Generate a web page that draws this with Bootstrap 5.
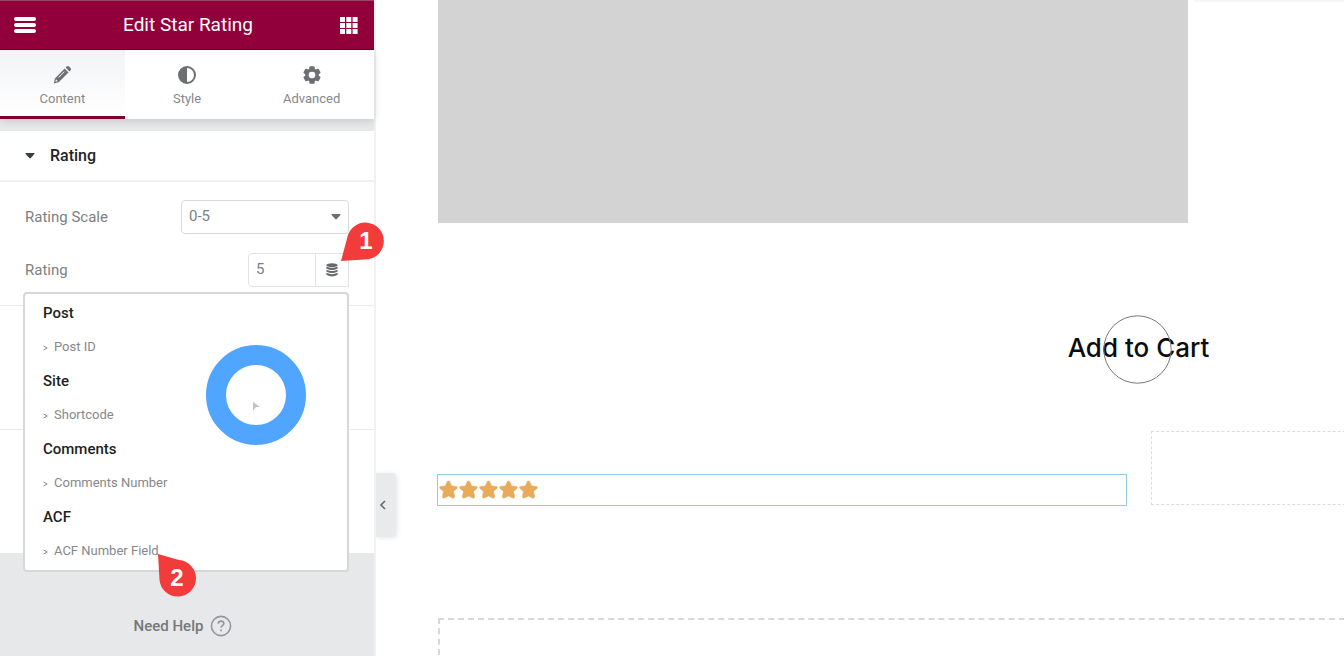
<!DOCTYPE html>
<html lang="en">
<head>
<meta charset="utf-8">
<meta name="viewport" content="width=device-width, initial-scale=1">
<title>Edit Star Rating</title>
<link href="https://cdn.jsdelivr.net/npm/bootstrap@5.3.0/dist/css/bootstrap.min.css" rel="stylesheet">
<style>
  body { font-family: Roboto, "Liberation Sans", sans-serif; font-size: 15px; color: #7c7f82; background: #fff; }
  .editor { min-height: 100vh; }
  button, a { color: inherit; }

  .panel { width: 376px; background: #e7e8ea; border-right: 2px solid #f1f1f3; z-index: 2; }
  .panel-top { height: 50px; background: #92003b; border-bottom: 1px solid #6a0426; border-top: 1px solid #a04468; color: #fff; padding: 0 16px 0 14px; }
  .panel-top h1 { font-size: 19px; line-height: 24px; }
  .panel-tabs { height: 69px; background: #fff; box-shadow: 0 2px 8px rgba(0,0,0,.14); margin-bottom: 12px; }
  .panel-tabs .nav-link { height: 69px; font-size: 13px; line-height: 16px; color: #85888b; border-radius: 0; border-bottom: 3px solid transparent; padding: 15px 0 0; gap: 6px; }
  .panel-tabs .nav-link.active { color: #85888b; background: linear-gradient(#f2f3f5, #fff); border-bottom-color: #7d0231; }
  .panel-tabs svg { color: #6d7073; }

  .section-head { height: 51px; padding: 0 25px; background: #fff; border: 0; border-bottom: 2px solid #f1f1f3; font-size: 16px; font-weight: 500; color: #222427; gap: 15px; }
  .section-body { background: #fff; padding: 18px 25px; }
  .section-rest { background: #fff; height: 124px; border-top: 1px solid #ebebed; }
  .control + .control { margin-top: 19px; }
  .panel .form-select, .panel .form-control { height: 34px; font-size: 15px; line-height: 20px; padding: 5px 7px 7px; color: #7c7f82; border-color: #d9dadc; border-radius: 4px; box-shadow: none; }
  .panel .form-select { width: 168px; background-image: none; }
  .select-wrap svg { right: 8px; top: 14px; pointer-events: none; }
  .value-group { width: 101px; }
  .value-group .btn { width: 34px; padding: 0; border: 1px solid #e2e3e5; border-left: 0; }
  .panel .value-group .form-control { border-color: #e2e3e5; }

  .tag-menu { left: -2px; right: 0; top: 39px; z-index: 5; background: #fff; border: 2px solid #d6d7d9; border-radius: 4px; padding: 2px 18px; }
  .tag-menu h2 { height: 34px; line-height: 34px; font-size: 15px; font-weight: 500; color: #1d1f22; margin: 0; }
  .tag-item { height: 34px; border: 0; background: none; padding: 0; font-size: 13px; line-height: 16px; color: #85888b; gap: 6px; }
  .tag-item svg { margin-top: 2px; }
  .spinner { right: 41px; top: 51px; }
  .pin { z-index: 6; pointer-events: none; }
  .pin text { font: bold 24px "Liberation Sans", sans-serif; fill: #fff; }
  .pin-one { left: 92px; top: -32px; }
  .pin-two { left: 131px; top: 257px; }

  .help-link { padding: 61px 8px 16px 0; gap: 7px; font-size: 15px; line-height: 24px; font-weight: 500; color: #75787b; }
  .panel-toggle { left: 376px; top: 473px; width: 20px; height: 64px; border: 0; background: #e9eaec; border-radius: 0 4px 4px 0; box-shadow: 1px 1px 5px rgba(0,0,0,.1); }
  .panel-toggle svg { margin-right: 6px; }

  .preview { min-width: 0; padding-left: 62px; max-height: 100vh; overflow: hidden; }
  .image-block { width: 750px; height: 223px; background: #d3d3d3; }
  .top-rule { height: 2px; background: #f6f6f6; margin-left: 6px; }
  .cart-row { padding: 93px 134px 0 0; }
  .cart-button { width: 143px; height: 68px; border: 0; background: none; padding: 0 0 4px; font-family: Inter, sans-serif; font-size: 26px; line-height: 34px; font-weight: 500; color: #0c0c0c; }
  .cart-button svg { left: 36px; top: -1px; }
  .widget-row { margin-top: 47px; gap: 24px; }
  .rating-box { flex: 0 0 690px; height: 32px; margin-left: -1px; border: 1px solid #8fcde0; padding: 0 1px; }
  .drop-box { flex: 1 0 220px; height: 74px; border: 1px dashed #dcdcdc; margin-bottom: 1px; }
  .drop-section { width: 110%; height: 120px; margin-top: 112px; border: 2px dashed #d8d8d8; }
</style>
</head>
<body>
<div class="editor d-flex position-relative">
  <aside class="panel d-flex flex-column flex-shrink-0 position-relative">
    <header class="panel-top d-flex align-items-center justify-content-between">
      <button class="btn p-0 border-0 d-flex" type="button" aria-label="Menu">
        <svg width="22" height="16" viewBox="0 0 22 16" fill="#fff"><rect width="22" height="4" rx="2"/><rect y="6" width="22" height="4" rx="2"/><rect y="12" width="22" height="4" rx="2"/></svg>
      </button>
      <h1 class="m-0 fw-normal">Edit Star Rating</h1>
      <button class="btn p-0 border-0 d-flex" type="button" aria-label="Widgets">
        <svg width="18" height="17" viewBox="0 0 18 17" fill="#fff"><path d="M0 0h5v5H0zM6.300 0h5v5h-5zM12.600 0h5v5h-5zM0 6h5v5H0zM6.300 6h5v5h-5zM12.600 6h5v5h-5zM0 12h5v5H0zM6.300 12h5v5h-5zM12.600 12h5v5h-5z"/></svg>
      </button>
    </header>

    <nav class="panel-tabs nav nav-fill flex-nowrap">
      <a class="nav-link active nav-item w-100 d-flex flex-column align-items-center" href="#">
        <svg width="20" height="20" viewBox="0 0 20 20" fill="currentColor"><path d="M13.600 2.600l1-1a1.800 1.800 0 0 1 2.500 0l1.400 1.400a1.800 1.800 0 0 1 0 2.500l-1 1z"/><path fill-rule="evenodd" d="M12.700 3.600l3.800 3.800L6.700 17.200 1.800 18.400 2.900 13.400zM4 14.200L3.400 16.800 5.900 16.200zM12.200 6.300L6.200 12.300 6.700 12.800 12.700 6.800z"/></svg>
        <span>Content</span>
      </a>
      <a class="nav-link nav-item w-100 d-flex flex-column align-items-center" href="#">
        <svg width="20" height="20" viewBox="0 0 20 20"><circle cx="10" cy="10" r="8" fill="none" stroke="currentColor" stroke-width="2"/><path d="M10 2a8 8 0 0 0 0 16z" fill="currentColor"/></svg>
        <span>Style</span>
      </a>
      <a class="nav-link nav-item w-100 d-flex flex-column align-items-center" href="#">
        <svg width="20" height="20" viewBox="0 0 20 20"><g fill="currentColor"><rect x="7.300" y="1.200" width="5.400" height="17.600" rx="1.200"/><rect x="7.300" y="1.200" width="5.400" height="17.600" rx="1.200" transform="rotate(60 10 10)"/><rect x="7.300" y="1.200" width="5.400" height="17.600" rx="1.200" transform="rotate(120 10 10)"/><circle cx="10" cy="10" r="6.800"/></g><circle cx="10" cy="10" r="3.300" fill="#fff"/></svg>
        <span>Advanced</span>
      </a>
    </nav>

    <button class="section-head d-flex align-items-center text-start w-100" type="button" aria-expanded="true">
      <svg width="10" height="6" viewBox="0 0 10 6"><path d="M1 0h8q1 0 .4.900L5.800 5q-.8.800-1.600 0L.6.900Q0 0 1 0z" fill="#3d4043"/></svg>
      Rating
    </button>

    <div class="section-body">
      <div class="control d-flex align-items-center justify-content-between">
        <label for="scale">Rating Scale</label>
        <div class="select-wrap position-relative">
          <select class="form-select" id="scale"><option>0-5</option><option>0-10</option></select>
          <svg class="position-absolute" width="10" height="6" viewBox="0 0 10 6"><path d="M1 0h8q1 0 .4.900L5.800 5q-.8.800-1.600 0L.6.900Q0 0 1 0z" fill="#6d7073"/></svg>
        </div>
      </div>
      <div class="control d-flex align-items-center justify-content-between position-relative">
        <label for="rating">Rating</label>
        <div class="value-group input-group flex-nowrap position-relative">
          <input class="form-control" id="rating" type="text" value="5">
          <button class="btn d-flex align-items-center justify-content-center" type="button" aria-label="Dynamic tags">
            <svg width="12" height="14" viewBox="0 0 12 14" fill="#66696c"><ellipse cx="6" cy="2.200" rx="5.600" ry="2"/><path d="M.4 3.600q5.600 2.800 11.200 0v1.900q-5.600 3-11.200 0zM.4 6.700q5.600 2.800 11.200 0v1.900q-5.600 3-11.200 0zM.4 9.800q5.600 2.800 11.200 0v1.900q-5.600 3.400-11.200 0z"/></svg>
          </button>
          <svg class="pin pin-one position-absolute" width="46" height="42" viewBox="0 0 46 42"><path d="M2 40L8.500 15.800A18.400 18.400 0 1 1 29 38.200z" fill="#f23b3b"/><text x="27" y="28" text-anchor="middle">1</text></svg>
        </div>

        <div class="tag-menu position-absolute">
          <h2>Post</h2>
          <button class="tag-item d-flex align-items-center" type="button"><svg width="5" height="6" viewBox="0 0 5 6"><path d="M.5 1L4.200 3 .5 5" fill="none" stroke="currentColor"/></svg>Post ID</button>
          <h2>Site</h2>
          <button class="tag-item d-flex align-items-center" type="button"><svg width="5" height="6" viewBox="0 0 5 6"><path d="M.5 1L4.200 3 .5 5" fill="none" stroke="currentColor"/></svg>Shortcode</button>
          <h2>Comments</h2>
          <button class="tag-item d-flex align-items-center" type="button"><svg width="5" height="6" viewBox="0 0 5 6"><path d="M.5 1L4.200 3 .5 5" fill="none" stroke="currentColor"/></svg>Comments Number</button>
          <h2>ACF</h2>
          <button class="tag-item d-flex align-items-center" type="button"><svg width="5" height="6" viewBox="0 0 5 6"><path d="M.5 1L4.200 3 .5 5" fill="none" stroke="currentColor"/></svg>ACF Number Field</button>
          <svg class="spinner position-absolute" width="100" height="100" viewBox="0 0 100 100"><circle cx="50" cy="50" r="40" fill="none" stroke="#4fa5ff" stroke-width="20"/><path d="M47 57l3 2 4 3h-4l-3 4z" fill="#c3c4c6"/></svg>
          <svg class="pin pin-two position-absolute" width="42" height="46" viewBox="0 0 42 46"><path d="M2 3L23 9A18.300 18.300 0 1 1 3.500 29z" fill="#f23b3b"/><text x="21" y="35" text-anchor="middle">2</text></svg>
        </div>
      </div>
    </div>
    <div class="section-rest"></div>
    <div class="section-rest"></div>

    <a class="help-link d-flex align-items-center justify-content-center text-decoration-none" href="#">
      Need Help
      <svg width="22" height="22" viewBox="0 0 22 22" fill="none" stroke="#94979a" stroke-width="1.600"><circle cx="11" cy="11" r="9.600"/><path d="M8.200 8.800q0-2.700 2.800-2.700t2.800 2.500q0 1.300-1.500 2.100-1.300.7-1.300 2.100"/><path d="M11 14.400v1.800"/></svg>
    </a>
  </aside>

  <button class="panel-toggle position-absolute d-flex align-items-center justify-content-center p-0" type="button" aria-label="Hide panel">
    <svg width="8" height="10" viewBox="0 0 8 10"><path d="M6 1L2 5l4 4" fill="none" stroke="#66696c" stroke-width="1.600"/></svg>
  </button>

  <main class="preview flex-grow-1">
    <div class="d-flex">
      <div class="image-block flex-shrink-0"></div>
      <div class="top-rule flex-grow-1"></div>
    </div>
    <div class="cart-row d-flex justify-content-end">
      <button class="cart-button position-relative text-nowrap d-flex justify-content-center align-items-center" type="button">
        Add to Cart
        <svg class="position-absolute" width="69" height="69" viewBox="0 0 69 69"><circle cx="34.500" cy="34.500" r="33.700" fill="none" stroke="#777" stroke-width="1"/></svg>
      </button>
    </div>
    <div class="widget-row d-flex align-items-end">
      <div class="rating-box d-flex align-items-center" role="img" aria-label="5 out of 5 stars">
        <svg width="100" height="20" viewBox="0 0 100 20" fill="#e8ab5a"><defs><path id="star" d="M9.500 1q1 0 1.400 1l1.700 4 4.500.4q1.300.2 1.300 1t-.7 1.300L14.500 11.500l1 4.600q.2 1.300-.6 1.800t-1.700-.1L9.500 15.900 5.800 17.800q-.9.600-1.700.1t-.6-1.800l1-4.600L1.300 8.700Q.6 8.100.6 7.400t1.300-1L6.400 6l1.700-4q.4-1 1.400-1z" stroke="#e8ab5a" stroke-width=".6"/></defs><use href="#star"/><use href="#star" x="20"/><use href="#star" x="40"/><use href="#star" x="60"/><use href="#star" x="80"/></svg>
      </div>
      <div class="drop-box"></div>
    </div>
    <div class="drop-section"></div>
  </main>
</div>
<script src="https://cdn.jsdelivr.net/npm/bootstrap@5.3.0/dist/js/bootstrap.bundle.min.js"></script>
</body>
</html>
